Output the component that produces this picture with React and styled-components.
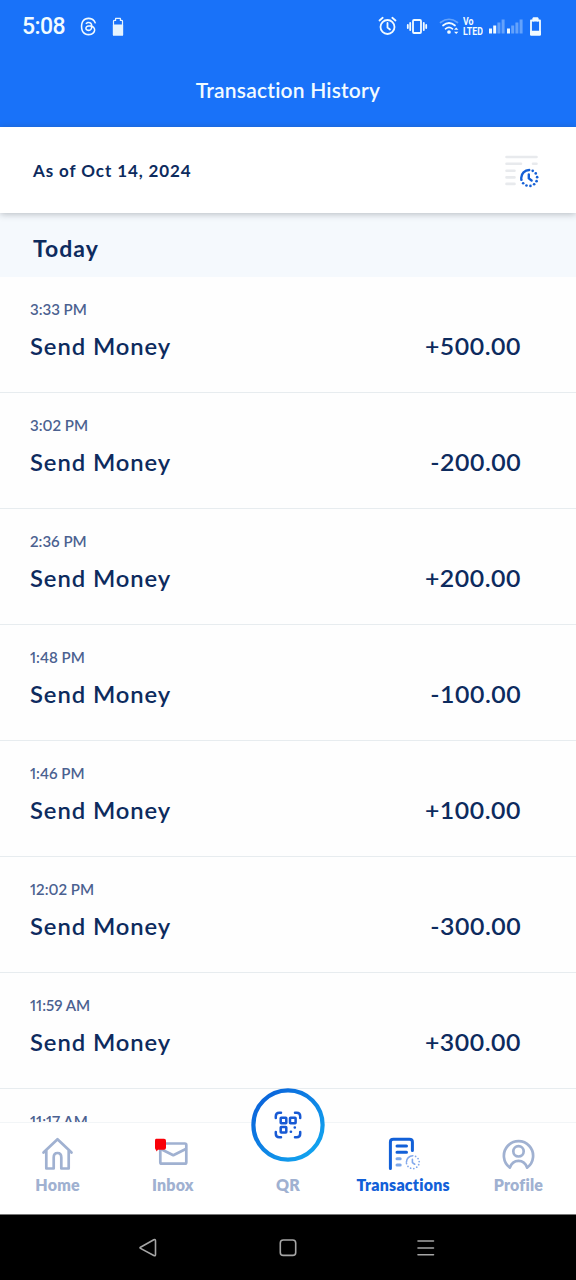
import React from "react";
import styled, { createGlobalStyle } from "styled-components";
import { FaThreads } from "react-icons/fa6";

const GlobalStyle = createGlobalStyle`
  * { box-sizing: border-box; }
  body { margin: 0; background: #fff; }
`;

const Screen = styled.div`
  width: 576px;
  height: 1280px;
  display: flex;
  flex-direction: column;
  overflow: hidden;
  background: #fefefe;
  color: #0d2b5e;
  font-family: Lato, "Liberation Sans", sans-serif;
  font-variant-ligatures: none;
`;

const Header = styled.header`
  flex: none;
  height: 127px;
  background: #1972f9;
  color: #f2fbff;
`;

const StatusBar = styled.div`
  height: 53px;
  padding: 0 34px 0 22px;
  display: flex;
  align-items: center;
  justify-content: space-between;
`;

const StatusGroup = styled.div`
  display: flex;
  align-items: center;
`;

const Clock = styled.span`
  width: 57px;
  font: 500 23px/54px Roboto, sans-serif;
  letter-spacing: -0.6px;
`;

const Title = styled.h1`
  margin: 0;
  text-align: center;
  font-size: 21px;
  font-weight: 600;
  line-height: 73px;
  letter-spacing: 0.2px;
`;

const FilterBar = styled.div`
  flex: none;
  position: relative;
  z-index: 1;
  height: 86px;
  padding: 0 36px 0 33px;
  display: flex;
  align-items: center;
  justify-content: space-between;
  background: #fff;
  box-shadow: 0 1px 7px rgba(40, 50, 60, 0.32);
`;

const AsOf = styled.span`
  font-size: 17px;
  font-weight: 700;
  letter-spacing: 0.9px;
`;

const DayHeading = styled.h2`
  flex: none;
  margin: 0;
  height: 64px;
  padding: 3px 33px 0;
  background: #f5f9fd;
  font-size: 23px;
  font-weight: 700;
  line-height: 64px;
  letter-spacing: 1px;
`;

const List = styled.main`
  flex: 1;
  min-height: 0;
  overflow: hidden;
`;

const Row = styled.article`
  height: 116px;
  padding: 20px 55px 0 30px;
  border-bottom: 1px solid #e7ecef;
`;

const Time = styled.div`
  font-size: 16px;
  font-weight: 600;
  font-feature-settings: "pnum";
  line-height: 24px;
  transform: scaleX(0.94);
  transform-origin: left;
  color: #4b6190;
`;

const RowLine = styled.div`
  margin-top: 9px;
  display: flex;
  justify-content: space-between;
  font-size: 23px;
  font-weight: 600;
  line-height: 32px;
`;

const Kind = styled.span`
  letter-spacing: 0.9px;
  transform: scaleX(1.035);
  transform-origin: left;
`;

const Amount = styled.span`
  letter-spacing: 0.5px;
  transform: scaleX(1.08);
  transform-origin: right;
`;

const TabBar = styled.nav`
  flex: none;
  position: relative;
  height: 92px;
  display: grid;
  grid-template-columns: repeat(5, 1fr);
  background: #fff;
  border-top: 1px solid #f2f5f7;
`;

const Tab = styled.div`
  display: flex;
  flex-direction: column;
  align-items: center;
  padding-top: 13px;
  color: ${(p) => (p.$active ? "#1260d8" : "#a0b1d1")};
`;

const TabIcon = styled.div`
  height: 37px;
`;

const TabLabel = styled.span`
  font-size: 16px;
  font-weight: 800;
  line-height: 24px;
  letter-spacing: 0.2px;
`;

const QrButton = styled.div`
  position: absolute;
  left: 251px;
  top: -35px;
  width: 74px;
  height: 74px;
`;

const Ring = styled.circle`
  fill: #fff;
  stroke: url(#ring);
  stroke-width: 4.2px;
`;

const SystemBar = styled.footer`
  flex: none;
  height: 66px;
  padding-right: 2px;
  display: flex;
  justify-content: center;
  align-items: center;
  gap: 115px;
  background: #000;
  border-top: 1px solid #777;
`;

const Glyph = styled.svg`
  display: block;
  flex: none;
  overflow: visible;
  fill: none;
  stroke: currentColor;
  stroke-width: ${(p) => p.$weight || 2};
  stroke-linecap: round;
  stroke-linejoin: round;
  margin-left: ${(p) => p.$gap || 0}px;
`;

const transactions = [
  ["3:33 PM", "+500.00"],
  ["3:02 PM", "-200.00"],
  ["2:36 PM", "+200.00"],
  ["1:48 PM", "-100.00"],
  ["1:46 PM", "+100.00"],
  ["12:02 PM", "-300.00"],
  ["11:59 AM", "+300.00"],
  ["11:17 AM", null],
];

const SmallBattery = () => (
  <Glyph width="12" height="20" $gap={14} $weight={1.2} opacity=".95">
    <path d="M1.5 18V4.2Q1.5 3.4 2.5 3.4H3.6V1.4H8.4V3.4H9.5Q10.5 3.4 10.5 4.2V18Z" />
    <path d="M1.5 8H10.5V18H1.5Z" fill="currentColor" />
  </Glyph>
);

const Alarm = () => (
  <Glyph width="18" height="20" $weight={1.8}>
    <circle cx="8.5" cy="10" r="7" />
    <path d="M8.5 6V10.5L11 12.5M.5 3.5L3.7 .8M16.5 3.5L13.3 .8" />
  </Glyph>
);

const Vibrate = () => (
  <Glyph width="20" height="18" $gap={10} $weight={1.8}>
    <rect x="6" y="2" width="8" height="13" rx="1" />
    <path d="M3.2 5V12M.8 7V10M16.8 5V12M19.2 7V10" />
  </Glyph>
);

const Wifi = () => (
  <Glyph width="20" height="18" $gap={13} $weight={1.7}>
    <path d="M.5 4.5Q9 -2 17.5 4.5" opacity=".35" />
    <path d="M3 7.5Q9 2.5 15 7.5M5.5 10.8Q9 8 12.5 10.8" />
    <circle cx="9" cy="14" r="1" fill="currentColor" />
    <path d="M14 11.8L16.2 9.5L18.4 11.8ZM14 13.8L16.2 16L18.4 13.8Z" fill="currentColor" stroke="none" />
  </Glyph>
);

const VoLteBox = styled.div`
  width: 21px;
  height: 20px;
  margin-left: 3px;
  display: flex;
  flex-direction: column;
  font: 700 11px/10px Roboto, sans-serif;
  transform: scaleX(0.8);
  transform-origin: left;
  white-space: nowrap;
`;

const VoLteLine = styled.span`
  height: 10px;
`;

const Signal = ({ strong, gap }) => (
  <Glyph width="16" height="16" $gap={gap}>
    <g fill="currentColor" stroke="none">
      <path d="M0 9.5H3V14.5H0Z" />
      <path d="M4.2 6.5H7.2V14.5H4.2Z" opacity={strong ? 1 : 0.35} />
      <path d="M8.4 3.5H11.4V14.5H8.4ZM12.6 .5H15.6V14.5H12.6Z" opacity=".35" />
    </g>
  </Glyph>
);

const Battery = () => (
  <Glyph width="12" height="20" $gap={7} $weight={1.8}>
    <path d="M1 17.5V3.5H3.5V1.3H7.5V3.5H10V17.5Z" />
    <path d="M1 14.7H10V17.5H1ZM3.5 1.5H7.5V3.5H3.5Z" fill="currentColor" />
  </Glyph>
);

const DottedClock = ({ x, y, r, weight, color }) => {
  const dots = Array.from({ length: 9 }, (_, i) => {
    const a = ((-64 + i * 29) * Math.PI) / 180;
    return <circle key={i} cx={x + r * Math.cos(a)} cy={y + r * Math.sin(a)} r={weight * 0.55} fill={color} stroke="none" />;
  });
  return (
    <g stroke={color} strokeWidth={weight}>
      <path d={`M${x - r} ${y}A${r} ${r} 0 0 1 ${x} ${y - r}`} />
      {dots}
      <path d={`M${x - 0.4} ${y - r * 0.45}V${y + 0.4}L${x + r * 0.3} ${y + r * 0.32}`} />
    </g>
  );
};

const HistoryIcon = () => (
  <Glyph width="36" height="32" $weight={2.6}>
    <path
      stroke="#e8eaed"
      d="M2.5 3H32.5M2.5 9.7H17M29 9.7H32.5M2.5 16.7H10.5M2.5 23.4H10.5M2.5 29.9H10.5"
    />
    <DottedClock x={25.2} y={24} r={8} weight={2.4} color="#1560d6" />
  </Glyph>
);

const HomeIcon = () => (
  <Glyph width="34" height="36" $weight={2.7}>
    <path d="M2.5 16.5L16.5 3.2L30.5 16.5M5.3 14.5V32.5H12.7V21.5Q12.7 17 16.5 17T20.3 21.5V32.5H27.7V14.5" />
  </Glyph>
);

const InboxIcon = () => (
  <Glyph width="34" height="36" $weight={2.7}>
    <rect x="4.3" y="7.5" width="26" height="20.2" rx="1.5" />
    <path d="M4.8 13L17.3 19.2L29.8 13" />
    <path d="M0 2.7H8Q10 2.7 10 4.7V11.7Q10 13.7 8 13.7H2L.5 15.6L0 13.7Q-1 13.7 -1 11.7V4.7Q-1 2.7 0 2.7Z" fill="#f90008" stroke="none" />
  </Glyph>
);

const TransactionsIcon = () => (
  <Glyph width="34" height="36" $weight={3}>
    <path d="M4.4 32.5V6Q4.4 3.3 7.4 3.3H23.4Q26.4 3.3 26.4 6V14.5" />
    <path d="M11 10H20.5M11 16.3H20.5" />
    <path d="M11 22.8H14.2M11 29H14.2" opacity=".55" />
    <DottedClock x={26.8} y={26.2} r={6.4} weight={1.6} color="#83a9ec" />
  </Glyph>
);

const ProfileIcon = () => (
  <Glyph width="34" height="36" $weight={2.7}>
    <path d="M8.9 31.6A14.6 14.6 0 1 1 26.1 31.6Q23.8 24.8 17.5 24.8T8.9 31.6Z" />
    <circle cx="17.5" cy="15.3" r="5.2" />
  </Glyph>
);

const QrIcon = () => (
  <Glyph width="74" height="74" viewBox="0 0 74 74" $weight={2.5}>
    <defs>
      <linearGradient id="ring" x1="0" y1="0" x2="1" y2="1">
        <stop offset=".15" stopColor="#0b68dc" />
        <stop offset=".9" stopColor="#12a4ef" />
      </linearGradient>
    </defs>
    <Ring cx="37" cy="37" r="34.6" />
    <g stroke="#1759d4">
      <path d="M24.8 30V28.3Q24.8 24.8 28.3 24.8H30M44 24.8H45.7Q49.2 24.8 49.2 28.3V30M49.2 44V45.7Q49.2 49.2 45.7 49.2H44M30 49.2H28.3Q24.8 49.2 24.8 45.7V44" />
      <rect x="29.7" y="29.7" width="5.6" height="5.6" rx=".5" />
      <rect x="39" y="29.7" width="5.6" height="5.6" rx=".5" />
      <rect x="29.7" y="39" width="5.6" height="5.6" rx=".5" />
      <path d="M39.8 43.8H40M43.7 39.6H43.9" />
    </g>
  </Glyph>
);

export default function App() {
  return (
    <Screen>
      <GlobalStyle />
      <Header>
        <StatusBar>
          <StatusGroup>
            <Clock>5:08</Clock>
            <FaThreads size={19} />
            <SmallBattery />
          </StatusGroup>
          <StatusGroup>
            <Alarm />
            <Vibrate />
            <Wifi />
            <VoLteBox>
              <VoLteLine>Vo</VoLteLine>
              <VoLteLine>LTED</VoLteLine>
            </VoLteBox>
            <Signal strong gap={5} />
            <Signal gap={2} />
            <Battery />
          </StatusGroup>
        </StatusBar>
        <Title>Transaction History</Title>
      </Header>
      <FilterBar>
        <AsOf>As of Oct 14, 2024</AsOf>
        <HistoryIcon />
      </FilterBar>
      <DayHeading>Today</DayHeading>
      <List>
        {transactions.map(([time, amount]) => (
          <Row key={time}>
            <Time>{time}</Time>
            {amount && (
              <RowLine>
                <Kind>Send Money</Kind>
                <Amount>{amount}</Amount>
              </RowLine>
            )}
          </Row>
        ))}
      </List>
      <TabBar>
        <Tab><TabIcon><HomeIcon /></TabIcon><TabLabel>Home</TabLabel></Tab>
        <Tab><TabIcon><InboxIcon /></TabIcon><TabLabel>Inbox</TabLabel></Tab>
        <Tab><TabIcon /><TabLabel>QR</TabLabel></Tab>
        <Tab $active><TabIcon><TransactionsIcon /></TabIcon><TabLabel>Transactions</TabLabel></Tab>
        <Tab><TabIcon><ProfileIcon /></TabIcon><TabLabel>Profile</TabLabel></Tab>
        <QrButton><QrIcon /></QrButton>
      </TabBar>
      <SystemBar>
        <Glyph width="24" height="24" $weight={1.6} color="#a6a6a6">
          <path d="M4.5 11.2L17.8 3.8Q19.5 3 19.5 5V18.6Q19.5 20.4 17.8 19.5L4.5 12.4Q3.5 11.8 4.5 11.2Z" />
        </Glyph>
        <Glyph width="24" height="24" $weight={1.6} color="#a6a6a6">
          <rect x="5.3" y="4" width="15.4" height="15.4" rx="3" />
        </Glyph>
        <Glyph width="24" height="24" $weight={1.6} color="#a6a6a6">
          <path d="M4 5H19.5M4 12H19.5M4 18.7H19.5" />
        </Glyph>
      </SystemBar>
    </Screen>
  );
}
